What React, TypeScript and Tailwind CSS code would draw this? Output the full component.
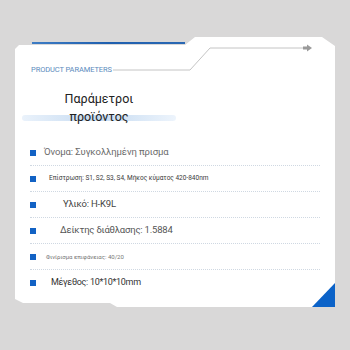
import React from 'react';

interface ParamRow {
  text: string;
  indent: string;
  size: string;
  color: string;
}

const rows: ParamRow[] = [
  { text: 'Όνομα: Συγκολλημένη πρισμα', indent: 'ml-[8px]', size: 'text-[9.5px] tracking-[-0.1px]', color: 'text-[#6b6b6b]' },
  { text: 'Επίστρωση: S1, S2, S3, S4, Μήκος κύματος 420-840nm', indent: 'ml-[13px]', size: 'text-[6.5px]', color: 'text-[#3a3a3a]' },
  { text: 'Υλικό: H-K9L', indent: 'ml-[27px]', size: 'text-[9.5px] tracking-[-0.2px]', color: 'text-[#444]' },
  { text: 'Δείκτης διάθλασης: 1.5884', indent: 'ml-[24px]', size: 'text-[9.5px] tracking-[-0.2px]', color: 'text-[#555]' },
  { text: 'Φινίρισμα επιφάνειας: 40/20', indent: 'ml-[10px]', size: 'text-[6px]', color: 'text-[#777]' },
  { text: 'Μέγεθος: 10*10*10mm', indent: 'ml-[15px]', size: 'text-[9px] tracking-[-0.3px]', color: 'text-[#333]' },
];

const App: React.FC = () => {
  return (
    <div className="w-[350px] h-[350px] bg-[#d9d8d8] pt-[37px] pl-[15px] font-['Roboto',sans-serif] overflow-hidden">
      <div className="relative w-[320px]">
        {/* blue accent above the left tab */}
        <div className="absolute top-[5px] left-[17px] w-[153px] h-[2px] bg-gradient-to-r from-[#3d7cc4] via-[#1f5fae] to-[#2a68b3] z-10" />

        <div className="relative h-[270px] bg-white pt-[28px] [clip-path:polygon(0_12px,4px_8px,170px_8px,180px_0,307px_0,320px_9px,320px_270px,102px_270px,95px_266px,8px_266px,0_262px)]">
          <svg className="absolute left-0 top-0" width="320" height="40" viewBox="0 0 320 40">
            <polyline points="98,33 175,33 195,11 288,11" fill="none" stroke="#c4c4c4" strokeWidth="1" />
            <rect x="288" y="9.5" width="4" height="3" fill="#9a9a9a" />
            <polygon points="292,7.5 297,11 292,14.5" fill="#9a9a9a" />
          </svg>

          <div className="ml-[16px] h-[10px] leading-[10px] text-[7.5px] tracking-[-0.1px] text-[#5b8bbd] uppercase">
            Product Parameters
          </div>

          <div className="relative ml-[7px] mt-[15px] w-[154px]">
            <div className="absolute left-0 top-[25px] w-full h-[6px] rounded-full bg-gradient-to-r from-[#eaf2fb] via-[#c6dbf1] to-[#edf4fc]" />
            <div className="relative text-center text-[12.5px] leading-[18px] text-[#222]">
              Παράμετροι
              <br />
              προϊόντος
            </div>
          </div>

          <div className="mt-[14px] mx-[15px]">
            {rows.map((r, i) => (
              <div
                key={i}
                className={`flex items-center h-[26px] ${i < rows.length - 1 ? 'border-b border-dotted border-[#cfd8e2]' : ''}`}
              >
                <span className="w-[6px] h-[6px] bg-[#1262c4] shrink-0" />
                <span className={`${r.indent} ${r.size} ${r.color} whitespace-nowrap`}>{r.text}</span>
              </div>
            ))}
          </div>

          <div className="absolute right-0 bottom-0 w-[23px] h-[24px] bg-[#0b62c8] [clip-path:polygon(100%_0,100%_100%,0_100%)]" />
        </div>
      </div>
    </div>
  );
};

export default App;
